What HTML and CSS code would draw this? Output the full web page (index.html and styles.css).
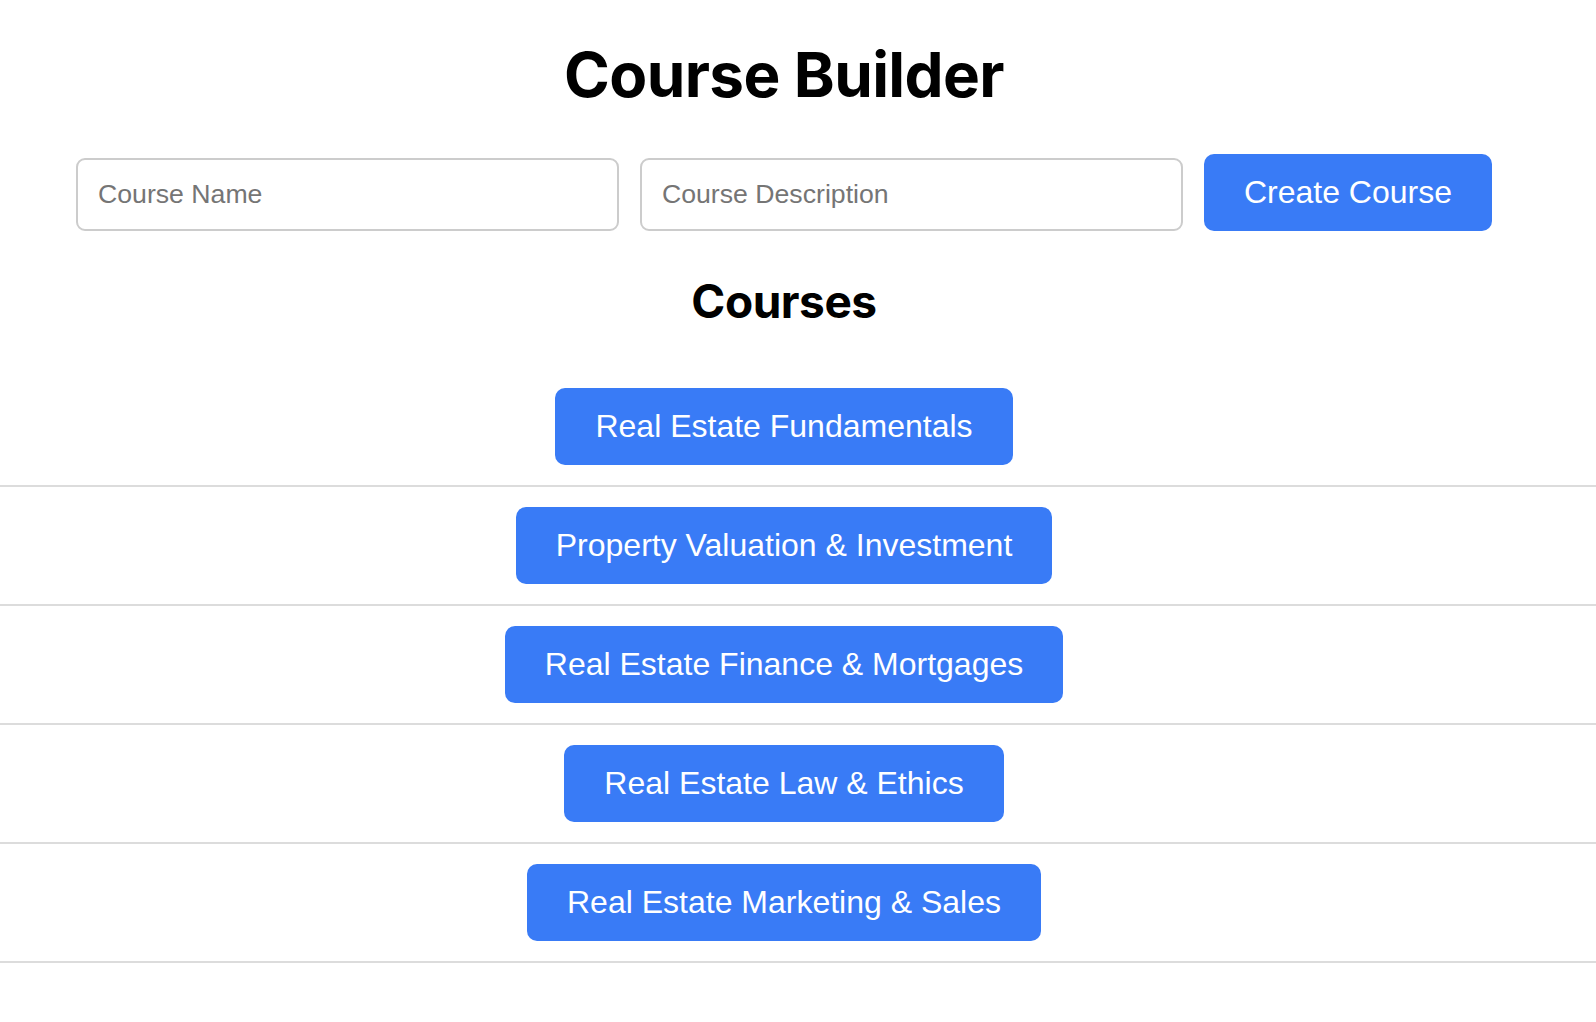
FILE: index.html
```html
<!DOCTYPE html>
<html lang="en">
<head>
<meta charset="utf-8">
<title>Course Builder</title>
<link rel="stylesheet" href="styles.css">
</head>
<body>
<div class="page">
  <h1 class="title">Course Builder</h1>
  <form class="course-form">
    <input class="field" type="text" placeholder="Course Name">
    <input class="field" type="text" placeholder="Course Description">
    <button class="btn" type="button">Create Course</button>
  </form>
  <h2 class="subtitle">Courses</h2>
  <ul class="course-list">
    <li class="course-item"><button class="btn" type="button">Real Estate Fundamentals</button></li>
    <li class="course-item"><button class="btn" type="button">Property Valuation &amp; Investment</button></li>
    <li class="course-item"><button class="btn" type="button">Real Estate Finance &amp; Mortgages</button></li>
    <li class="course-item"><button class="btn" type="button">Real Estate Law &amp; Ethics</button></li>
    <li class="course-item"><button class="btn" type="button">Real Estate Marketing &amp; Sales</button></li>
  </ul>
</div>
</body>
</html>
```
FILE: styles.css
```css
html, body {
  margin: 0;
  padding: 0;
  background: #ffffff;
}

body {
  font-family: Inter, "Liberation Sans", sans-serif;
  color: #000;
  overflow-x: hidden;
}

.page {
  width: 1568px;
}

.title {
  margin: 0;
  padding-top: 38px;
  font-size: 62px;
  line-height: 1.2;
  font-weight: 700;
  text-align: center;
  letter-spacing: -0.01em;
}

.course-form {
  display: flex;
  align-items: flex-end;
  gap: 21px;
  padding: 0 76px;
  margin: 42px 0 0;
}

.field {
  flex: 1;
  min-width: 0;
  font-family: "Liberation Sans", Arial, sans-serif;
  font-size: 26.67px;
  padding: 19px 20px;
  border: 2px solid #cccccc;
  border-radius: 9px;
  color: #000;
  background: #fff;
  outline: none;
}

.field::placeholder {
  color: #757575;
}

.btn {
  font-family: "Liberation Sans", Arial, sans-serif;
  font-size: 32px;
  line-height: normal;
  color: #ffffff;
  background: #397bf6;
  border: none;
  border-radius: 10px;
  padding: 20px 40px;
  cursor: pointer;
  white-space: nowrap;
}

.subtitle {
  margin: 43px 0 0;
  font-size: 46px;
  line-height: 1.2;
  font-weight: 700;
  text-align: center;
  letter-spacing: -0.01em;
}

.course-list {
  list-style: none;
  margin: 38px -28px 0 0;
  padding: 0;
}

.course-item {
  display: flex;
  justify-content: center;
  padding: 20px 28px 20px 0;
  border-bottom: 2px solid #dcdcdc;
}
```
